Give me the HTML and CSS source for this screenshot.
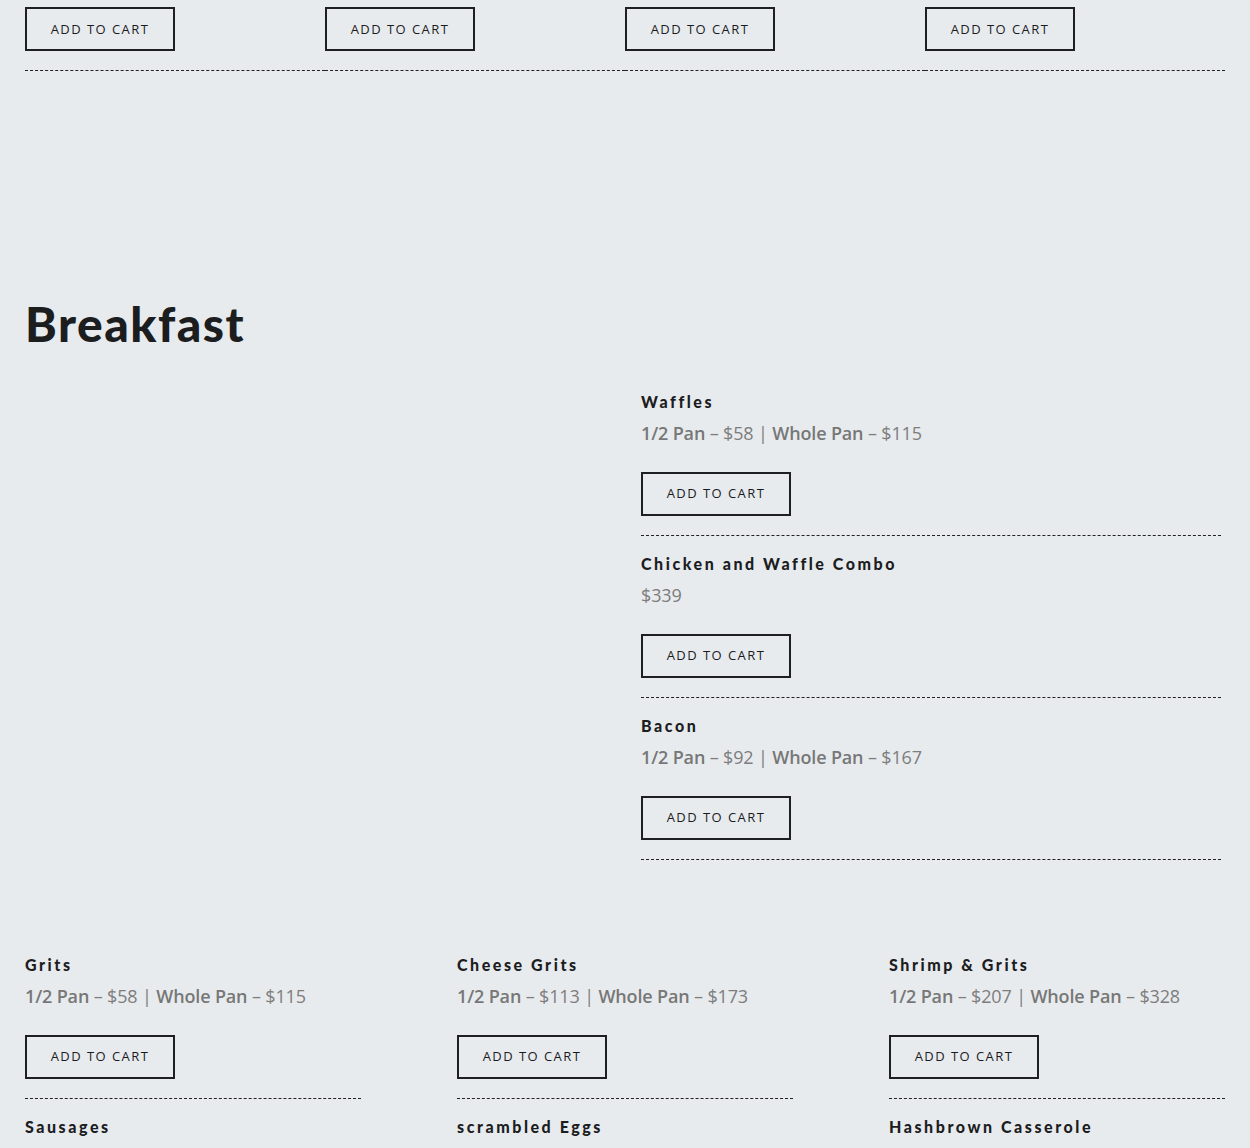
FILE: index.html
```html
<!DOCTYPE html>
<html lang="en">
<head>
<meta charset="utf-8">
<title>Menu</title>
<link rel="stylesheet" href="styles.css">
</head>
<body>
<div class="page">
  <div class="top-row">
    <div class="top-item"><button class="cart-btn">ADD TO CART</button></div>
    <div class="top-item"><button class="cart-btn">ADD TO CART</button></div>
    <div class="top-item"><button class="cart-btn">ADD TO CART</button></div>
    <div class="top-item"><button class="cart-btn">ADD TO CART</button></div>
  </div>

  <section class="section">
    <h2 class="section-title">Breakfast</h2>
    <div class="feature">
      <div class="feature-media"></div>
      <div class="feature-list">
        <div class="item">
          <h3 class="item-name">Waffles</h3>
          <p class="price"><b>1/2 Pan</b> – $58 | <b>Whole Pan</b> – $115</p>
          <button class="cart-btn">ADD TO CART</button>
        </div>
        <div class="item">
          <h3 class="item-name">Chicken and Waffle Combo</h3>
          <p class="price">$339</p>
          <button class="cart-btn">ADD TO CART</button>
        </div>
        <div class="item">
          <h3 class="item-name">Bacon</h3>
          <p class="price"><b>1/2 Pan</b> – $92 | <b>Whole Pan</b> – $167</p>
          <button class="cart-btn">ADD TO CART</button>
        </div>
      </div>
    </div>

    <div class="grid3">
      <div class="col">
        <div class="item">
          <h3 class="item-name">Grits</h3>
          <p class="price"><b>1/2 Pan</b> – $58 | <b>Whole Pan</b> – $115</p>
          <button class="cart-btn">ADD TO CART</button>
        </div>
        <div class="item">
          <h3 class="item-name">Sausages</h3>
          <p class="price"><b>1/2 Pan</b> – $92 | <b>Whole Pan</b> – $167</p>
          <button class="cart-btn">ADD TO CART</button>
        </div>
      </div>
      <div class="col">
        <div class="item">
          <h3 class="item-name">Cheese Grits</h3>
          <p class="price"><b>1/2 Pan</b> – $113 | <b>Whole Pan</b> – $173</p>
          <button class="cart-btn">ADD TO CART</button>
        </div>
        <div class="item">
          <h3 class="item-name">scrambled Eggs</h3>
          <p class="price"><b>1/2 Pan</b> – $58 | <b>Whole Pan</b> – $115</p>
          <button class="cart-btn">ADD TO CART</button>
        </div>
      </div>
      <div class="col">
        <div class="item">
          <h3 class="item-name">Shrimp &amp; Grits</h3>
          <p class="price"><b>1/2 Pan</b> – $207 | <b>Whole Pan</b> – $328</p>
          <button class="cart-btn">ADD TO CART</button>
        </div>
        <div class="item">
          <h3 class="item-name">Hashbrown Casserole</h3>
          <p class="price"><b>1/2 Pan</b> – $92 | <b>Whole Pan</b> – $167</p>
          <button class="cart-btn">ADD TO CART</button>
        </div>
      </div>
    </div>
  </section>
</div>
</body>
</html>
```
FILE: styles.css
```css
* { box-sizing: border-box; }

html, body {
  margin: 0;
  padding: 0;
  background: #e8ebee;
  color: #1c1d1f;
  font-family: "Open Sans", "Liberation Sans", sans-serif;
}

.page {
  padding: 0 25px;
}

.top-row {
  display: grid;
  grid-template-columns: repeat(4, 300px);
}

.top-item {
  padding-top: 7px;
  padding-bottom: 19px;
  border-bottom: 1px dashed #222;
}

.cart-btn {
  display: flex;
  align-items: center;
  justify-content: center;
  width: 150px;
  height: 44px;
  margin: 0;
  padding: 0 0 1px;
  background: transparent;
  border: 2px solid #1e1f21;
  color: #1a1b1d;
  font-family: "Open Sans", "Liberation Sans", sans-serif;
  font-size: 13px;
  font-weight: 500;
  letter-spacing: 1.45px;
  cursor: pointer;
}

.section-title {
  margin: 224px 0 0;
  font-family: "Lato", "Liberation Sans", sans-serif;
  font-size: 48px;
  line-height: 57.6px;
  font-weight: 900;
  color: #1c1d1f;
  letter-spacing: 1.5px;
}

.feature {
  display: grid;
  grid-template-columns: 600px 580px;
  column-gap: 16px;
  margin-top: 37px;
}

.item {
  padding-bottom: 19px;
  border-bottom: 1px dashed #222;
}

.item + .item {
  padding-top: 16px;
}

.item-name {
  margin: 0;
  font-family: "Lato", "Liberation Sans", sans-serif;
  font-size: 16px;
  line-height: 24px;
  font-weight: 900;
  letter-spacing: 2.55px;
  color: #1c1d1f;
}

.price {
  margin: 6px 0 25px;
  font-family: "Open Sans", "Liberation Sans", sans-serif;
  font-size: 18px;
  line-height: 27px;
  color: #7d7d7d;
  letter-spacing: -0.15px;
}

.price b {
  font-weight: 600;
  color: #777;
}

.grid3 {
  display: grid;
  grid-template-columns: repeat(3, 336px);
  column-gap: 96px;
  margin-top: 93px;
}
```
